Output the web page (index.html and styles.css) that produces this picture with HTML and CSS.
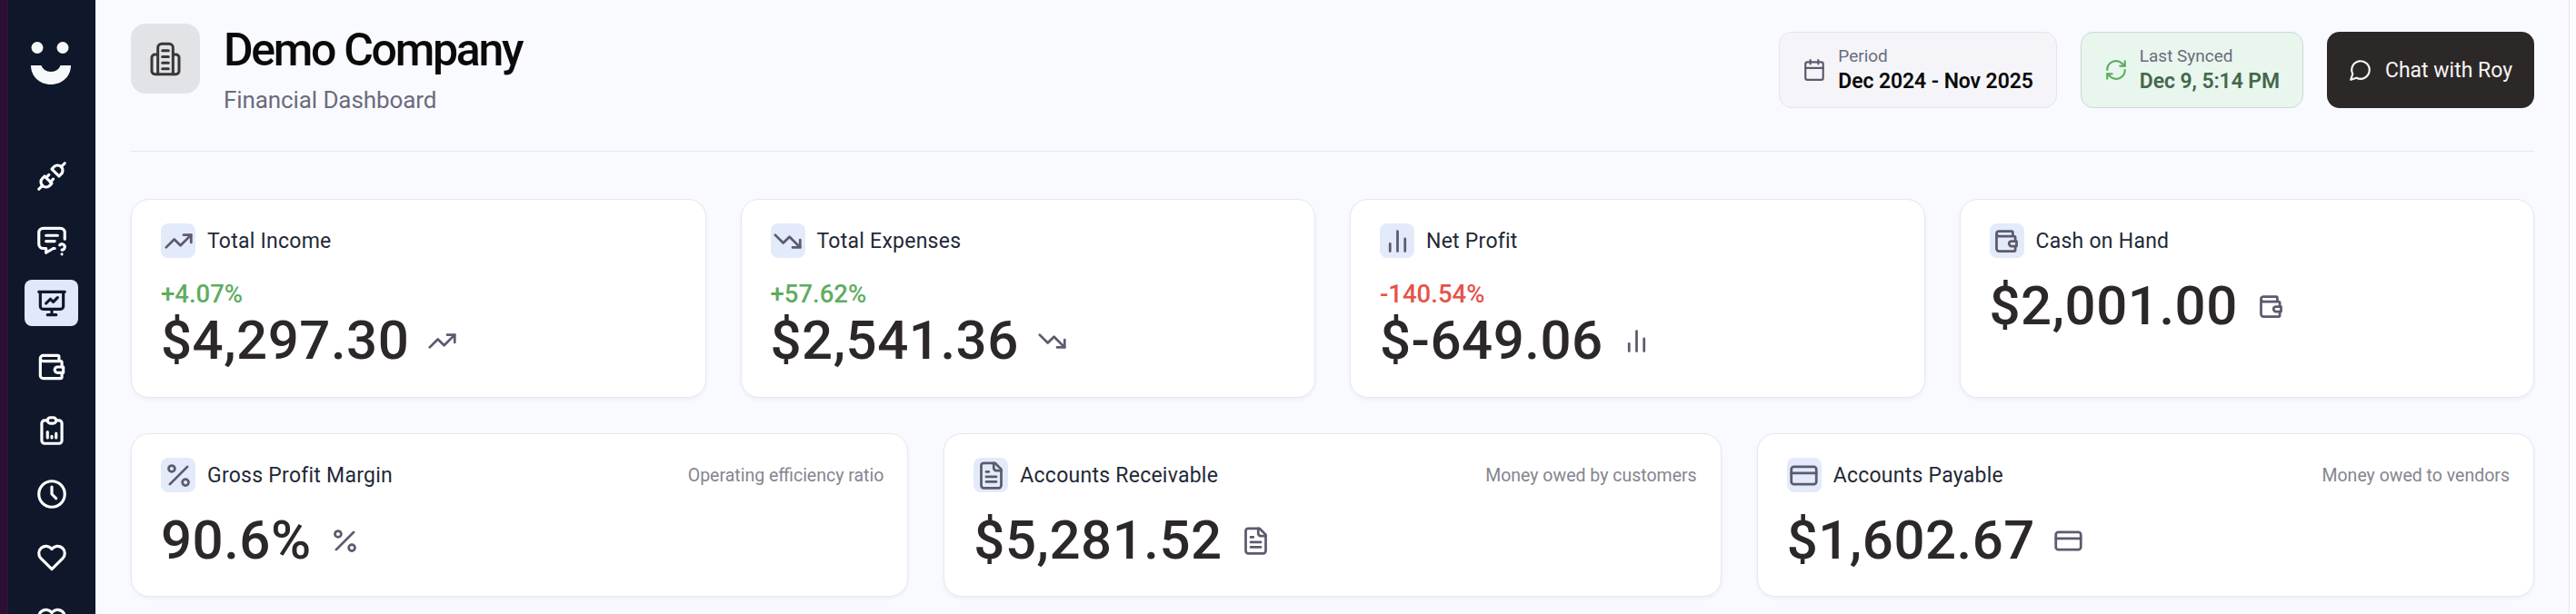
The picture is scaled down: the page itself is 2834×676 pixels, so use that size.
FILE: index.html
```html
<!DOCTYPE html>
<html lang="en">
<head>
<meta charset="utf-8">
<title>Financial Dashboard</title>
<link rel="stylesheet" href="styles.css">
</head>
<body>
<svg class="sprite" aria-hidden="true">
  <symbol id="i-up" viewBox="0 0 24 24"><path d="M22 7 13.500 15.500 8.500 10.500 2 17"/><path d="M16 7h6v6"/></symbol>
  <symbol id="i-down" viewBox="0 0 24 24"><path d="M22 17 13.500 8.500 8.500 13.500 2 7"/><path d="M16 17h6v-6"/></symbol>
  <symbol id="i-bars" viewBox="0 0 24 24"><path d="M18 20V10M12 20V4M6 20v-6"/></symbol>
  <symbol id="i-wallet" viewBox="0 0 24 24"><path d="M17 8V5a1 1 0 0 0-1-1H6a2 2 0 0 0 0 4h12a1 1 0 0 1 1 1v3m0 4v3a1 1 0 0 1-1 1H6a2 2 0 0 1-2-2V6"/><path d="M20 12v4h-4a2 2 0 0 1 0-4h4"/></symbol>
  <symbol id="i-percent" viewBox="0 0 24 24"><path d="M19 5 5 19"/><circle cx="6.500" cy="6.500" r="2.500"/><circle cx="17.500" cy="17.500" r="2.500"/></symbol>
  <symbol id="i-file" viewBox="0 0 24 24"><path d="M15 2H6a2 2 0 0 0-2 2v16a2 2 0 0 0 2 2h12a2 2 0 0 0 2-2V7z"/><path d="M14 2v4a2 2 0 0 0 2 2h4"/><path d="M10 9H8M16 13H8M16 17H8"/></symbol>
  <symbol id="i-card" viewBox="0 0 24 24"><rect x="2" y="5" width="20" height="14" rx="2"/><path d="M2 10h20"/></symbol>
  <symbol id="i-heart" viewBox="0 0 24 24"><path d="M19.500 12.572 12 20l-7.500-7.428a5 5 0 1 1 7.500-6.566 5 5 0 1 1 7.500 6.572"/></symbol>
</svg>
<div class="app">
  <div class="edge"></div>
  <nav class="sidebar">
    <svg class="logo" viewBox="0 0 44 48"><circle cx="7" cy="6.500" r="6.500"/><circle cx="35" cy="6.500" r="6.500"/><path d="M0 26h11.500c1.500 4 5 7 10.500 7s9-3 10.500-7H44c0 12-9.500 21-22 21S0 38 0 26z"/></svg>
    <ul class="nav">
      <li class="nav-item"><svg viewBox="0 0 24 24"><path d="m7 12 5 5-1.500 1.500a3.536 3.536 0 1 1-5-5z"/><path d="m17 12-5-5 1.500-1.500a3.536 3.536 0 1 1 5 5z"/><path d="m3 21 2.500-2.500M18.500 5.500 21 3M10 11l-2 2M13 14l-2 2"/></svg></li>
      <li class="nav-item"><svg viewBox="0 0 24 24"><path d="M8 9h8M8 13h6"/><path d="M14 18h-1l-5 3v-3H6a3 3 0 0 1-3-3V7a3 3 0 0 1 3-3h12a3 3 0 0 1 3 3v4.500"/><path d="M19 22v.01M19 19a2.003 2.003 0 0 0 .914-3.782 1.980 1.980 0 0 0-2.414.483"/></svg></li>
      <li class="nav-item is-active"><svg viewBox="0 0 24 24"><path d="M3 4h18M4 4v10a2 2 0 0 0 2 2h12a2 2 0 0 0 2-2V4M12 16v4M9 20h6"/><path d="m8 12 3-3 2 2 3-3"/></svg></li>
      <li class="nav-item"><svg viewBox="0 0 24 24"><use href="#i-wallet"/></svg></li>
      <li class="nav-item"><svg viewBox="0 0 24 24"><path d="M9 5H7a2 2 0 0 0-2 2v12a2 2 0 0 0 2 2h10a2 2 0 0 0 2-2V7a2 2 0 0 0-2-2h-2"/><rect x="9" y="3" width="6" height="4" rx="2"/><path d="M9 17v-4M12 17v-1M15 17v-3"/></svg></li>
      <li class="nav-item"><svg viewBox="0 0 24 24"><circle cx="12" cy="12" r="9"/><path d="M12 7v5l3 3"/></svg></li>
      <li class="nav-item"><svg viewBox="0 0 24 24"><use href="#i-heart"/></svg></li>
      <li class="nav-item"><svg viewBox="0 0 24 24"><use href="#i-heart"/></svg></li>
    </ul>
  </nav>
  <main class="main">
    <header class="header">
      <div class="brand">
        <div class="brand-icon"><svg viewBox="0 0 24 24"><path d="M7 22V4.500A2.500 2.500 0 0 1 9.500 2h5A2.500 2.500 0 0 1 17 4.500V22"/><path d="M7 9H5a2 2 0 0 0-2 2v9a2 2 0 0 0 2 2h14a2 2 0 0 0 2-2v-9a2 2 0 0 0-2-2h-2"/><path d="M10 6.500h4M10 10.500h4M10 14.500h4M10 18.500h4"/></svg></div>
        <div class="brand-text">
          <h1 class="title">Demo Company</h1>
          <p class="subtitle">Financial Dashboard</p>
        </div>
      </div>
      <div class="actions">
        <div class="pill pill-period">
          <svg class="pill-icon" viewBox="0 0 24 24"><rect x="3" y="4" width="18" height="18" rx="2"/><path d="M8 2v4M16 2v4M3 10h18"/></svg>
          <div><div class="pill-label">Period</div><div class="pill-value">Dec 2024 - Nov 2025</div></div>
        </div>
        <div class="pill pill-sync">
          <svg class="pill-icon" viewBox="0 0 24 24"><path d="M3 12a9 9 0 0 1 15-6.700L21 8"/><path d="M21 3v5h-5"/><path d="M21 12a9 9 0 0 1-15 6.700L3 16"/><path d="M8 16H3v5"/></svg>
          <div><div class="pill-label">Last Synced</div><div class="pill-value">Dec 9, 5:14 PM</div></div>
        </div>
        <button class="chat"><svg viewBox="0 0 24 24"><path d="M7.900 20A9 9 0 1 0 4 16.100L2 22z"/></svg>Chat with Roy</button>
      </div>
    </header>
    <section class="grid grid-4">
      <article class="card">
        <div class="card-head"><div class="chip"><svg><use href="#i-up"/></svg></div><span class="label">Total Income</span></div>
        <div class="delta pos">+4.07%</div>
        <div class="value-row"><span class="value">$4,297.30</span><svg class="value-icon"><use href="#i-up"/></svg></div>
      </article>
      <article class="card">
        <div class="card-head"><div class="chip"><svg><use href="#i-down"/></svg></div><span class="label">Total Expenses</span></div>
        <div class="delta pos">+57.62%</div>
        <div class="value-row"><span class="value">$2,541.36</span><svg class="value-icon"><use href="#i-down"/></svg></div>
      </article>
      <article class="card">
        <div class="card-head"><div class="chip"><svg><use href="#i-bars"/></svg></div><span class="label">Net Profit</span></div>
        <div class="delta neg">-140.54%</div>
        <div class="value-row"><span class="value">$-649.06</span><svg class="value-icon"><use href="#i-bars"/></svg></div>
      </article>
      <article class="card">
        <div class="card-head"><div class="chip"><svg><use href="#i-wallet"/></svg></div><span class="label">Cash on Hand</span></div>
        <div class="value-row"><span class="value">$2,001.00</span><svg class="value-icon"><use href="#i-wallet"/></svg></div>
      </article>
    </section>
    <section class="grid grid-3">
      <article class="card">
        <div class="card-head"><div class="chip"><svg><use href="#i-percent"/></svg></div><span class="label">Gross Profit Margin</span><span class="hint">Operating efficiency ratio</span></div>
        <div class="value-row"><span class="value">90.6%</span><svg class="value-icon"><use href="#i-percent"/></svg></div>
      </article>
      <article class="card">
        <div class="card-head"><div class="chip"><svg><use href="#i-file"/></svg></div><span class="label">Accounts Receivable</span><span class="hint">Money owed by customers</span></div>
        <div class="value-row"><span class="value">$5,281.52</span><svg class="value-icon"><use href="#i-file"/></svg></div>
      </article>
      <article class="card">
        <div class="card-head"><div class="chip"><svg><use href="#i-card"/></svg></div><span class="label">Accounts Payable</span><span class="hint">Money owed to vendors</span></div>
        <div class="value-row"><span class="value">$1,602.67</span><svg class="value-icon"><use href="#i-card"/></svg></div>
      </article>
    </section>
  </main>
  <div class="scroll-track"></div>
</div>
</body>
</html>
```
FILE: styles.css
```css
* { box-sizing: border-box; }
html, body { margin: 0; height: 100%; overflow: hidden; }
body { font-family: Roboto, "Noto Sans", sans-serif; background: #f9faff; color: #2c2827; }
svg { fill: none; stroke: currentColor; stroke-width: 2; stroke-linecap: round; stroke-linejoin: round; }
.sprite { width: 0; height: 0; position: absolute; }
.app { display: flex; height: 676px; overflow: hidden; }
.edge { width: 9px; flex: none; background: #2d0f33; border-right: 1px solid #1d1f38; }
.sidebar { width: 96px; flex: none; background: #0f172a; display: flex; flex-direction: column; align-items: center; padding-top: 46px; }
.logo { width: 44px; height: 48px; flex: none; fill: #f6f8fa; stroke: none; margin-left: -2px; }
.nav { list-style: none; flex: none; margin: 74px 0 0; padding: 0; display: flex; flex-direction: column; align-items: center; gap: 19px; margin-left: -1px; }
.nav-item { width: 59px; height: 51px; flex: none; display: flex; align-items: center; justify-content: center; border-radius: 8px; color: #fff; }
.nav-item svg { width: 38px; height: 38px; }
.is-active { background: #e1e7fd; color: #0f172a; }
.main { flex: 1; min-width: 0; padding: 26px 38px 0 39px; }
.header { display: flex; justify-content: space-between; align-items: flex-start; height: 141px; border-bottom: 1px solid #e5e7eb; margin-bottom: 52px; }
.brand { display: flex; gap: 27px; }
.brand-icon { width: 76px; height: 77px; border-radius: 16px; background: #e2e3e7; color: #3a3638; display: flex; align-items: center; justify-content: center; }
.brand-icon svg { width: 40px; height: 40px; stroke-width: 1.800; }
.brand-text { padding-top: 1px; margin-left: -1px; }
.title { margin: 0; font-size: 50px; line-height: 56px; font-weight: 500; color: #0a0a0a; letter-spacing: -2.300px; }
.subtitle { margin: 13px 0 0; font-size: 26px; line-height: 28px; color: #6b6b7d; letter-spacing: -.1px; }
.actions { display: flex; gap: 26px; padding-top: 9px; }
.pill { height: 84px; display: flex; align-items: center; gap: 13px; padding: 0 25px; border: 1px solid #e3e5ea; border-radius: 14px; background: #f5f5f9; }
.pill-icon { width: 26px; height: 26px; color: #5d5a6e; flex: none; }
.pill-label { font-size: 19px; line-height: 26px; color: #6b6b7d; }
.pill-value { font-size: 23px; line-height: 30px; font-weight: 600; color: #0a0a0a; letter-spacing: -.1px; }
.pill-sync { background: #e9f6ee; border-color: #ccd8d6; }
.pill-sync .pill-icon { color: #5fac62; }
.pill-sync .pill-value { color: #43684c; }
.chat { height: 84px; width: 228px; display: flex; align-items: center; justify-content: center; gap: 14px; border: 0; border-radius: 14px; background: #2c2827; color: #f5f5f5; font: 400 23px Roboto, sans-serif; }
.chat svg { width: 26px; height: 26px; }
.grid { display: grid; margin-bottom: 39px; }
.grid-4 { grid-template-columns: repeat(4, 1fr); gap: 38px; }
.grid-3 { grid-template-columns: repeat(3, 1fr); gap: 39px; }
.grid-4 .card { height: 219px; }
.grid-3 .card { height: 180px; }
.card { background: #fff; border: 1px solid #e6e8ef; border-radius: 20px; box-shadow: 0 2px 4px rgba(20, 30, 60, .05); padding: 26px 26px 26px 32px; }
.card-head { display: flex; align-items: center; gap: 13px; margin-bottom: 23px; }
.chip { width: 38px; height: 38px; flex: none; border-radius: 8px; background: #e3ebfa; color: #5d5a6e; display: flex; align-items: center; justify-content: center; }
.chip svg, .value-icon { width: 33px; height: 33px; flex: none; color: #5d5a6e; }
.label { font-size: 23px; color: #1f2937; letter-spacing: .25px; }
.hint { margin-left: auto; font-size: 19.500px; color: #85858f; }
.delta { font-size: 27.500px; line-height: 34px; font-weight: 500; margin-bottom: 4px; }
.pos { color: #5fac62; }
.neg { color: #e5534b; }
.value-row { display: flex; align-items: center; gap: 20px; height: 60px; }
.value { font-size: 60px; line-height: 60px; font-weight: 500; color: #2c2827; letter-spacing: .5px; }
.scroll-track { width: 8px; flex: none; background: #fcfcfe; border-left: 1px solid #e5e7eb; }
```
